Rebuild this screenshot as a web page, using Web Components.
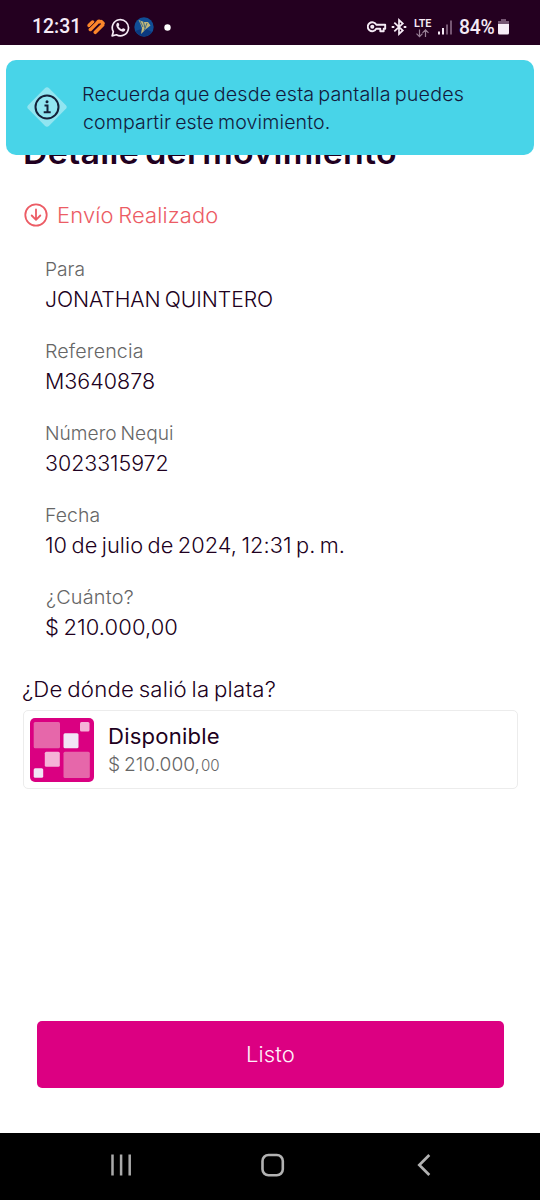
<!DOCTYPE html>
<html lang="es">
<head>
<meta charset="utf-8">
<title>Detalle del movimiento</title>
<style>
html,body{margin:0;padding:0;background:#fff}
body{font-family:Inter,"Liberation Sans",sans-serif;color:#200020;width:540px;height:1200px;overflow:hidden}
</style>
</head>
<body>
<movement-screen></movement-screen>
<script>
const define=(name,html,setup)=>customElements.define(name,class extends HTMLElement{
  constructor(){super();this.attachShadow({mode:'open'}).innerHTML=html;}
  connectedCallback(){if(setup)setup(this,this.shadowRoot);}
});

/* One line of text, widened and tracked so that its visible ink spans the "span" width. */
const ctx=document.createElement('canvas').getContext('2d');
define('tracked-text',`<style>:host{display:block;white-space:nowrap;width:var(--w)}span{display:inline-block;transform-origin:0 50%}</style><span><slot></slot></span>`,(el,root)=>{
  const size=+el.getAttribute('size'),weight=el.getAttribute('weight')||'300',family=el.getAttribute('family')||'Inter';
  const text=el.textContent,span=+el.getAttribute('span'),ws=-0.08*size;
  ctx.font=`${weight} ${size}px ${family}`;
  const advance=ctx.measureText(text).width;
  ctx.font=`${weight} ${size*10}px ${family}`;
  const m=ctx.measureText(text),spaces=text.split(' ').length-1;
  const left=m.actualBoundingBoxLeft/10,right=(m.width-m.actualBoundingBoxRight)/10;
  const ink=advance+left-right+spaces*ws,goal=span-1;
  const scale=1+(goal/ink-1)*0.75;
  const ls=(goal/scale-ink)/(text.length-1);
  el.style.setProperty('--w',span+'px');
  const s=root.querySelector('span').style;
  s.font=`${weight} ${size}px ${family}, sans-serif`;s.lineHeight='inherit';
  s.letterSpacing=ls+'px';s.wordSpacing=ws+'px';s.transform=`scaleX(${scale})`;s.marginLeft=left*scale*0.5+'px';
});

define('status-bar',`<style>
:host{display:flex;height:45px;box-sizing:border-box;padding:9px 31px 0 33px;background:#240020;color:#f5eaf5;align-items:center;justify-content:space-between;line-height:36px}
div{display:flex;align-items:center;height:36px}svg{display:block;flex:none}
.net{display:flex;flex-direction:column;line-height:9px;height:20px;margin:0 6px 0 7px}
</style>
<div>
<tracked-text size="19.5" weight="500" family="Roboto" span="45">12:31</tracked-text>
<svg style="margin-left:9px" width="18" height="16" viewBox="0 0 18 16" fill="none" stroke="#fa862b" stroke-width="3.6" stroke-linecap="round"><path d="M2.2 6.4 5.6 3.1M3.4 10.4 10.6 3.2Q12 1.9 13.2 3M8.3 13.3 15.6 6M14.2 2.6 16 4.3"/><path stroke="#240020" stroke-width="1" d="M2.5 8.7 8.4 2.8M5.6 12.2 13.2 4.6"/></svg>
<svg style="margin-left:5.5px" width="19" height="19" viewBox="0 0 19 19"><path d="M1.1 17.9 2.3 13.7A8.1 8.1 0 1 1 5.4 16.8Z" fill="none" stroke="#f5eaf5" stroke-width="1.7" stroke-linejoin="round"/><path d="M6.2 5.1c.6-.7 1.2-.5 1.4 0l.7 1.7c.1.5-.3.9-.8 1.4.8 1.6 1.9 2.5 3.4 3.1.6-.8.9-1.2 1.4-1l1.7.8c.5.3.3 1.3-.3 1.8-1.2 1.1-2.8.9-4.6-.1C7.3 11.7 5.6 9.7 5.3 7.6c-.1-1 .2-1.9.9-2.5Z" fill="#f5eaf5"/></svg>
<svg style="margin-left:4px" width="20" height="20" viewBox="0 0 20 20"><circle cx="10" cy="10" r="9.7" fill="#104e96"/><path d="M1.5 14A9.5 9.5 0 0 0 18 15L10 11Z" fill="#0b397f"/><path d="M4.5 3 10 5 14 5 16.5 8.5 12 12 7 17 8 11 6.5 7Z" fill="#c1b77a"/><path d="m6 4 3 6M9.5 5l1.500 6M13 6l-3 8" stroke="#436d83" stroke-width="1"/></svg>
<svg style="margin-left:10.5px" width="7" height="7" viewBox="0 0 7 7"><circle cx="3.5" cy="3.5" r="3.2" fill="#fff"/></svg>
</div>
<div>
<svg width="20" height="14" viewBox="0 0 20 14" fill="none" stroke="#f5eaf5" stroke-width="1.9" stroke-linejoin="round"><path d="M9.3 4.7H18.2V8.7H16.7V11.3H13.3V8.7H9.3A4.5 4.5 0 1 1 9.3 4.7Z"/><circle cx="5.3" cy="6.7" r="1.1"/></svg>
<svg style="margin-left:4.5px" width="16" height="18" viewBox="0 0 16 18" fill="none" stroke="#f5eaf5" stroke-width="1.7"><path d="M3.3 4.7 11.8 12.5 8 16V2L11.8 5.5 3.3 13.3"/><path d="M.7 9h2.6M12.7 9h2.6" stroke-width="2"/></svg>
<span class="net"><tracked-text size="10.5" weight="600" family="Roboto" span="17.5">LTE</tracked-text>
<svg width="17" height="10" viewBox="0 0 17 10" fill="none" stroke="#987f96" stroke-width="1.2"><path d="M5.5 1.5v7M2.5 5.7l3 3 3-3M11.5 9V2M8.5 4.8l3-3 3 3"/></svg></span>
<svg width="15" height="15" viewBox="0 0 15 15" fill="#f5eaf5"><path d="M0 11.5h2v3H0zM4 8h2v6.5H4z"/><path fill="#765673" d="M8 4.5h2v10H8zM12 .5h2v14h-2z"/></svg>
<tracked-text style="margin-left:6.5px" size="20" weight="500" family="Roboto" span="35">84%</tracked-text>
<svg style="margin-left:4px" width="11" height="16" viewBox="0 0 11 16"><path fill="#765673" d="M3 0h5v2h3v3H0V2h3Z"/><path fill="#f7edf7" d="M0 5h11v9q0 1.5-1.5 1.5h-8Q0 15.5 0 14Z"/></svg>
</div>`);

define('info-toast',`<style>
:host{position:absolute;left:5.5px;top:59.5px;width:528.7px;height:95.7px;border-radius:10px;background:#48d4e8;display:flex;box-sizing:border-box;padding:21.5px 0 0 20.5px;color:#131a3d;line-height:27px}
svg{flex:none;margin:5.3px 15px 0 0}
</style>
<svg width="42" height="42" viewBox="0 0 42 42"><rect x="6.3" y="6.3" width="29.4" height="29.4" rx="3" transform="rotate(45 21 21)" fill="#91e5f1"/><circle cx="21" cy="21" r="11.5" fill="none" stroke="#142039" stroke-width="2"/><circle cx="21" cy="15.7" r="1.5" fill="#142039"/><path d="M18.5 19.4h3v6.4M17.7 26.3h7" fill="none" stroke="#142039" stroke-width="2"/></svg>
<div><slot></slot></div>`);

define('detail-field',`<style>
:host{display:block;height:60px}
.l{color:#666;line-height:26px}.v{line-height:32px}
</style><div class="l"><slot name="label"></slot></div><div class="v"><slot></slot></div>`);

define('movement-status',`<style>
:host{display:flex;align-items:center;color:#ec5c65;height:28px;line-height:28px;gap:10.5px}
svg{position:relative;top:-1.5px}
</style><svg width="24" height="24" viewBox="0 0 24 24" fill="none" stroke="currentColor" stroke-width="1.8" stroke-linecap="round" stroke-linejoin="round"><circle cx="12" cy="12" r="10.7"/><path d="M12 6.5v10M7.7 12.5 12 16.8l4.3-4.3"/></svg><slot></slot>`);

define('pocket-card',`<style>
:host{display:flex;box-sizing:border-box;width:495px;height:79px;border:1px solid #ececec;border-radius:5px;padding:7px 7px 0 6.5px;gap:14.5px}
svg{flex:none}.t{padding-top:5.5px}.n{line-height:28px}.a{display:flex;gap:2.5px;line-height:26px;color:#666;align-items:baseline}
</style>
<svg width="64" height="64" viewBox="0 0 64 64"><rect width="64" height="64" rx="5" fill="#da0081"/><g fill="#e667aa"><rect x="3.7" y="4" width="26.3" height="26.3" rx="1.5"/><rect x="33.5" y="33.7" width="26.3" height="26.3" rx="1.5"/></g><g fill="#f5b3d7"><rect x="50" y="4" width="9.5" height="9.5" rx="1.5"/><rect x="14.8" y="33.7" width="15" height="15" rx="1.5"/></g><g fill="#f1e6f5"><rect x="33.5" y="15.3" width="15" height="15" rx="1.5"/><rect x="3.7" y="50.3" width="9.5" height="9.5" rx="1.5"/></g></svg>
<div class="t"><div class="n"><slot></slot></div><div class="a"><slot name="amount"></slot></div></div>`);

define('primary-button',`<style>
:host{display:block}
button{display:flex;align-items:center;justify-content:center;width:100%;height:67.5px;border:0;border-radius:5px;background:#dc0082;color:#fff0fa;padding:3px 0 0;line-height:30px}
</style><button><slot></slot></button>`);

define('system-nav',`<style>
:host{display:grid;grid-template-columns:repeat(3,151.5px);padding-left:45.5px;height:67.5px;background:#000;place-items:center;box-sizing:border-box}
svg{position:relative;top:-1px}
</style>
<svg width="24" height="24" viewBox="0 0 24 24" stroke="#aaa" stroke-width="2.5"><path d="M3.5 1.5v21M12.1 1.5v21M20.7 1.5v21"/></svg>
<svg width="24" height="24" viewBox="0 0 24 24" fill="none" stroke="#b2b2b2" stroke-width="2.6"><rect x="1.5" y="2" width="20.3" height="20.3" rx="6"/></svg>
<svg width="24" height="24" viewBox="0 0 24 24" fill="none" stroke="#b2b2b2" stroke-width="2.7"><path d="M17.3 2 7.3 12l10 10"/></svg>`);

const field=(l,lw,v,vw)=>`<detail-field><tracked-text slot="label" size="19" span="${lw}">${l}</tracked-text><tracked-text size="21.5" span="${vw}">${v}</tracked-text></detail-field>`;
define('movement-screen',`<style>
:host{display:flex;flex-direction:column;width:540px;height:1200px;background:#fff;position:relative}
main{flex:1;display:flex;flex-direction:column;padding:88px 23px 0 22.500px}
h1{margin:0 0 0 2px;line-height:40px;height:40px}
movement-status{margin:29px 0 0 1.5px}
.fields{display:flex;flex-direction:column;gap:22px;margin:26.5px 0 0 23.5px}
h2{margin:30px 0 0 .5px;line-height:28px;height:28px}
pocket-card{margin-top:7px}
primary-button{margin:auto 13px 44.5px 14.5px}
</style>
<status-bar></status-bar>
<main>
<h1><tracked-text size="32" weight="600" span="371.5">Detalle del movimiento</tracked-text></h1>
<movement-status><tracked-text size="21" span="159">Envío Realizado</tracked-text></movement-status>
<div class="fields">
${field('Para',37.7,'JONATHAN QUINTERO',226.7)}
${field('Referencia',96,'M3640878',107.7)}
${field('Número Nequi',126.5,'3023315972',121.7)}
${field('Fecha',52.7,'10 de julio de 2024, 12:31 p. m.',298)}
${field('¿Cuánto?',86.7,'$ 210.000,00',131.3)}
</div>
<h2><tracked-text size="20.8" span="252.7">¿De dónde salió la plata?</tracked-text></h2>
<pocket-card><tracked-text size="21" weight="400" span="109.7">Disponible</tracked-text><tracked-text slot="amount" size="19" span="90">$ 210.000,</tracked-text><tracked-text slot="amount" size="15.5" span="17.7">00</tracked-text></pocket-card>
<primary-button><tracked-text size="21.5" weight="300" span="46.5">Listo</tracked-text></primary-button>
</main>
<system-nav></system-nav>
<info-toast><tracked-text size="19" span="380">Recuerda que desde esta pantalla puedes</tracked-text><tracked-text size="19" span="245.5">compartir este movimiento.</tracked-text></info-toast>`);
</script>
</body>
</html>
